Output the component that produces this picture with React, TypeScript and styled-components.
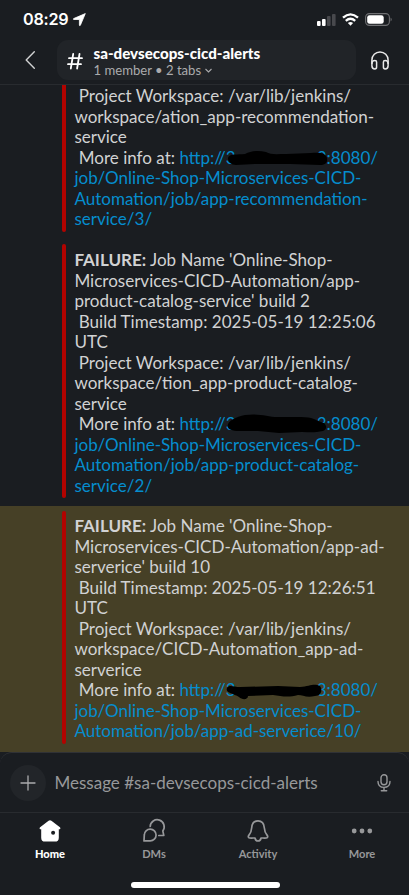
import React from "react";
import styled, { createGlobalStyle } from "styled-components";

const GlobalStyle = createGlobalStyle`
  * { box-sizing: border-box; }
  body { margin: 0; background: #1a1d21; }
`;

const Screen = styled.div`
  width: 409px;
  height: 895px;
  display: flex;
  flex-direction: column;
  overflow: hidden;
  background: #1a1d21;
  color: #d1d2d3;
  font-family: Lato, "Liberation Sans", sans-serif;
`;

const StatusBar = styled.div`
  height: 40px;
  flex: none;
  display: flex;
  align-items: center;
  padding: 0 17px 2px 23px;
  color: #fff;
`;

const Clock = styled.span`
  font: 600 16.2px/20px Inter, sans-serif;
  letter-spacing: -0.25px;
  width: 50px;
`;

const StatusIcons = styled.div`
  margin-left: auto;
  display: flex;
  align-items: center;
  gap: 6px;
`;

const Icon = styled.svg`
  display: block;
  flex: none;
  overflow: visible;
`;

const Header = styled.header`
  height: 45px;
  flex: none;
  display: flex;
  align-items: flex-start;
  border-bottom: 1px solid #282b2f;
`;

const BackButton = styled.div`
  width: 57px;
  padding: 11px 0 0 25px;
`;

const ChannelPill = styled.div`
  width: 299px;
  height: 40px;
  border-radius: 11px;
  background: #212428;
  display: flex;
  padding-left: 10px;
`;

const HashSlot = styled.div`
  width: 26.5px;
  padding-top: 13px;
`;

const ChannelText = styled.div`
  padding-top: 4px;
`;

const ChannelName = styled.div`
  color: #fff;
  font-size: 15.13px;
  font-weight: 900;
  line-height: 18px;
  white-space: nowrap;
`;

const ChannelMeta = styled.div`
  display: flex;
  align-items: center;
  gap: 4px;
  color: #ababad;
  font-size: 13.1px;
  line-height: 16px;
  white-space: nowrap;
`;

const HuddleButton = styled.div`
  padding: 11px 0 0 15px;
`;

const Feed = styled.main`
  height: 667px;
  flex: none;
  display: flex;
  flex-direction: column;
`;

const Message = styled.article<{ $height: number; $top?: number; $marked?: boolean }>`
  height: ${(p) => p.$height}px;
  flex: none;
  padding: ${(p) => p.$top ?? 0}px 0 0 62px;
  background: ${(p) => (p.$marked ? "#464026" : "transparent")};
`;

const Attachment = styled.div<{ $height: number }>`
  height: ${(p) => p.$height}px;
  display: flex;
  gap: 8.4px;
`;

const Stripe = styled.div<{ $clipped?: boolean }>`
  width: 4px;
  flex: none;
  background: #b10300;
  border-radius: ${(p) => (p.$clipped ? "0 0 2px 2px" : "2px")};
`;

const Lines = styled.div<{ $top: number }>`
  padding-top: ${(p) => p.$top}px;
  font-size: 17.05px;
  line-height: 20.5px;
  white-space: pre;
`;

const Strong = styled.b`
  font-weight: 700;
`;

const Link = styled.span`
  color: #058dce;
`;

const Redaction = styled.span`
  display: inline-block;
  width: 81px;
  height: 14px;
  vertical-align: -2px;
  position: relative;
`;

const Scribble = styled.svg`
  position: absolute;
  left: -12px;
  top: -4px;
  overflow: visible;
`;

const Composer = styled.div`
  height: 61px;
  flex: none;
  display: flex;
  align-items: center;
  padding: 0 18px 0 10px;
  border-top: 1px solid #303236;
  border-bottom: 1px solid #282b2f;
  border-radius: 12px 12px 0 0;
  background: #1a1d21;
`;

const AddButton = styled.div`
  width: 36px;
  height: 36px;
  border-radius: 50%;
  background: #222529;
  display: grid;
  place-items: center;
`;

const Placeholder = styled.div`
  flex: 1;
  padding: 1px 0 0 8.4px;
  color: #97989a;
  font-size: 17.05px;
  line-height: 22px;
  white-space: nowrap;
`;

const Tabs = styled.nav`
  height: 67px;
  flex: none;
  display: grid;
  grid-template-columns: repeat(4, 104px);
  margin-left: -2px;
`;

const Tab = styled.div<{ $active?: boolean }>`
  display: flex;
  flex-direction: column;
  align-items: center;
  gap: 5px;
  color: ${(p) => (p.$active ? "#fff" : "#97989a")};
  font-size: 11.1px;
  font-weight: ${(p) => (p.$active ? 900 : 700)};
  line-height: 14px;
  padding-top: 7px;
`;

const HomeIndicator = styled.div`
  width: 149px;
  height: 6px;
  flex: none;
  margin: 2px 0 0 131px;
  border-radius: 3px;
  background: #fff;
`;

type Shape = 0 | 1 | 2;

const scribbles: string[] = [
  "M4 10C5 5 14 7 21 6C27 3 34 2 42 4C47 7 53 6 62 6L87 5C96 4 102 5 103 10C104 15 101 17 96 17L66 16L31 16L12 17C7 17 4 14 4 10Z",
  "M4 13C2 8 11 3 21 1C36-1 43 3 54 3L77 3C89 3 91 6 97 8C103 9 104 15 99 17C90 19 85 18 78 18L55 19L34 17L15 17C8 17 4 15 4 13Z",
  "M3 8C5 4 10 7 16 7L54 6L76 7C86 6 90 3 96 6C99 10 97 16 91 16C82 18 79 15 74 15C64 18 57 16 49 15L24 16C24 20 18 20 15 17C9 13 1 13 3 8Z",
];

const Address = ({ shape }: { shape: Shape }) => (
  <Link>
    http://3
    <Redaction>
      <Scribble width="108" height="22" viewBox="0 0 108 22">
        <path d={scribbles[shape]} fill="#000" />
      </Scribble>
    </Redaction>
    3:8080/
  </Link>
);

interface Job {
  title?: string[];
  time?: string;
  workspace: string[];
  shape: Shape;
  link: string[];
}

const JobLines = ({ job }: { job: Job }) => (
  <>
    {job.title && (
      <>
        <div><Strong>FAILURE:</Strong> {job.title[0]}</div>
        <div>{job.title[1]}</div>
        <div>{job.title[2]}</div>
        <div>{" Build Timestamp: " + job.time}</div>
        <div>UTC</div>
      </>
    )}
    <div>{" Project Workspace: /var/lib/jenkins/"}</div>
    {job.workspace.map((line) => <div key={line}>{line}</div>)}
    <div>{" More info at: "}<Address shape={job.shape} /></div>
    {job.link.map((line) => <div key={line}><Link>{line}</Link></div>)}
  </>
);

const recommendation: Job = {
  workspace: ["workspace/ation_app-recommendation-", "service"],
  shape: 0,
  link: ["job/Online-Shop-Microservices-CICD-", "Automation/job/app-recommendation-", "service/3/"],
};

const catalog: Job = {
  title: ["Job Name 'Online-Shop-", "Microservices-CICD-Automation/app-", "product-catalog-service' build 2"],
  time: "2025-05-19 12:25:06",
  workspace: ["workspace/tion_app-product-catalog-", "service"],
  shape: 1,
  link: ["job/Online-Shop-Microservices-CICD-", "Automation/job/app-product-catalog-", "service/2/"],
};

const ads: Job = {
  title: ["Job Name 'Online-Shop-", "Microservices-CICD-Automation/app-ad-", "serverice' build 10"],
  time: "2025-05-19 12:26:51",
  workspace: ["workspace/CICD-Automation_app-ad-", "serverice"],
  shape: 2,
  link: ["job/Online-Shop-Microservices-CICD-", "Automation/job/app-ad-serverice/10/"],
};

export default function App() {
  return (
    <Screen>
      <GlobalStyle />
      <StatusBar>
        <Clock>08:29</Clock>
        <Icon width="13" height="13" viewBox="0 0 13 13">
          <path d="M12.3.6 7.4 12.2c-.3.7-1 .6-1-.2V6.5H1C.2 6.5.1 5.8.8 5.5Z" fill="#fff" stroke="#fff" strokeWidth=".8" strokeLinejoin="round" />
        </Icon>
        <StatusIcons>
          <Icon width="20" height="13" viewBox="0 0 20 13">
            <rect x="1" y="8" width="3.6" height="5" rx="1" fill="#fff" />
            <rect x="6" y="6" width="3.6" height="7" rx="1" fill="#fff" />
            <rect x="11" y="3" width="3.6" height="10" rx="1" fill="#48494d" />
            <rect x="16" y="1" width="3.6" height="12" rx="1" fill="#48494d" />
          </Icon>
          <Icon width="17" height="13" viewBox="0 0 17 13" fill="none" stroke="#fff" strokeWidth="2.3">
            <path d="M1 4.7Q8.5-2 16 4.7M3.8 7.8Q8.5 3.7 13.2 7.8" />
            <path d="M8.5 12.8 5.9 10.1Q8.5 8 11.1 10.1Z" fill="#fff" stroke="none" />
          </Icon>
          <Icon width="27" height="13" viewBox="0 0 27 13">
            <rect x=".6" y=".6" width="23.8" height="11.8" rx="3.8" fill="none" stroke="#6f7073" strokeWidth="1.1" />
            <rect x="2.2" y="2.2" width="16.5" height="8.6" rx="2.3" fill="#fff" />
            <path d="M25.6 4.5Q27.8 6.5 25.6 8.5Z" fill="#6f7073" />
          </Icon>
        </StatusIcons>
      </StatusBar>
      <Header>
        <BackButton>
          <Icon width="11" height="18" viewBox="0 0 11 18" fill="none" stroke="#d1d2d3" strokeWidth="1.4" strokeLinecap="round" strokeLinejoin="round">
            <path d="M9.3.8 1.2 9l8.1 8.2" />
          </Icon>
        </BackButton>
        <ChannelPill>
          <HashSlot>
            <Icon width="16" height="17" viewBox="0 0 16 17" fill="none" stroke="#fff" strokeWidth="1.8" strokeLinecap="round">
              <path d="M6.2 1 3.8 15.5M12.5 1l-2.4 14.5M2 5.2h13M1 11.2h13" />
            </Icon>
          </HashSlot>
          <ChannelText>
            <ChannelName>sa-devsecops-cicd-alerts</ChannelName>
            <ChannelMeta>
              1 member • 2 tabs
              <Icon width="7" height="5" viewBox="0 0 7 5" fill="none" stroke="#ababad" strokeWidth="1.1">
                <path d="m.5 1 3 3 3-3" />
              </Icon>
            </ChannelMeta>
          </ChannelText>
        </ChannelPill>
        <HuddleButton>
          <Icon width="18" height="19" viewBox="0 0 18 19" fill="none" stroke="#e8e8e8" strokeWidth="1.5" strokeLinejoin="round">
            <path d="M.9 13V9a8.1 8.1 0 0 1 16.2 0v4" />
            <path d="M.9 12.5c0-2 1.2-3 3-3 1.2 0 1.7.5 1.7 1.5v5c0 1.2-.6 1.900-1.700 1.900-2 0-3-1.200-3-3.200ZM17.100 12.500c0-2-1.200-3-3-3-1.200 0-1.700.5-1.700 1.500v5c0 1.200.6 1.900 1.700 1.900 2 0 3-1.200 3-3.200Z" />
          </Icon>
        </HuddleButton>
      </Header>
      <Feed>
        <Message $height={159}>
          <Attachment $height={147}>
            <Stripe $clipped />
            <Lines $top={1}><JobLines job={recommendation} /></Lines>
          </Attachment>
        </Message>
        <Message $height={262}>
          <Attachment $height={254}>
            <Stripe />
            <Lines $top={6}><JobLines job={catalog} /></Lines>
          </Attachment>
        </Message>
        <Message $height={246} $top={5} $marked>
          <Attachment $height={233}>
            <Stripe />
            <Lines $top={5}><JobLines job={ads} /></Lines>
          </Attachment>
        </Message>
      </Feed>
      <Composer>
        <AddButton>
          <Icon width="16" height="16" viewBox="0 0 16 16" stroke="#ababad" strokeWidth="1.3" strokeLinecap="round">
            <path d="M8 1v14M1 8h14" />
          </Icon>
        </AddButton>
        <Placeholder>Message #sa-devsecops-cicd-alerts</Placeholder>
        <Icon width="14" height="18" viewBox="0 0 14 18" fill="none" stroke="#97989a" strokeWidth="1.4" strokeLinecap="round">
          <rect x="4" y=".8" width="6" height="10" rx="3" />
          <path d="M1 7.500C1 11.500 3.500 13.400 7 13.400s6-1.900 6-5.900M7 13.500v3.200M4.300 16.800h5.400" />
        </Icon>
      </Composer>
      <Tabs>
        <Tab $active>
          <Icon width="22" height="22" viewBox="0 0 22 22">
            <path d="M9.600.7Q11-.4 12.400.7L20.900 7.200c1.200 1 .2 2.500-1.100 2v8.500q0 3.900-3.900 3.900H6.100q-3.900 0-3.900-3.900V9.200C.9 9.700-.1 8.200 1.100 7.200Z" fill="#fff" />
            <circle cx="14.100" cy="12.700" r="2" fill="#1a1d21" />
          </Icon>
          Home
        </Tab>
        <Tab>
          <Icon width="22" height="22" viewBox="0 0 22 22" fill="none" stroke="#97989a" strokeWidth="1.700" strokeLinejoin="round" strokeLinecap="round">
            <path d="M7.200 6.500a7 7 0 1 1 12.600 4.400L20.800 15.500h-5M1 20.900l.3-6A5.900 5.900 0 1 1 7.200 20.900Z" />
          </Icon>
          DMs
        </Tab>
        <Tab>
          <Icon width="22" height="22" viewBox="0 0 22 22" fill="none" stroke="#97989a" strokeWidth="1.700" strokeLinejoin="round" strokeLinecap="round">
            <path d="M11 .9c-4 0-6 2.800-6.300 6.800-.3 3.700-.8 5.100-2.600 7.200-1.200 1.500-1.100 3 .5 3.100 2 .1 3.500 0 5.400 0 .3 1.900 1.400 3 3 3s2.700-1.100 3-3c1.900 0 3.400.1 5.400 0 1.600-.1 1.700-1.600.5-3.100-1.800-2.100-2.300-3.500-2.600-7.200C17 3.700 15 .9 11 .9Z" />
          </Icon>
          Activity
        </Tab>
        <Tab>
          <Icon width="22" height="22" viewBox="0 0 22 22" fill="#97989a">
            <circle cx="3.200" cy="11" r="2.400" />
            <circle cx="11" cy="11" r="2.400" />
            <circle cx="18.800" cy="11" r="2.400" />
          </Icon>
          More
        </Tab>
      </Tabs>
      <HomeIndicator />
    </Screen>
  );
}
